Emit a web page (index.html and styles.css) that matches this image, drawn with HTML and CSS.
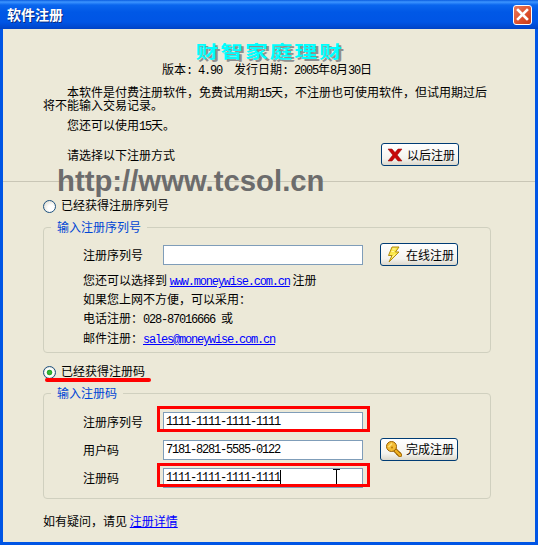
FILE: index.html
```html
<!DOCTYPE html>
<html lang="zh-CN">
<head>
  <meta charset="UTF-8" />
  <title>软件注册</title>
  <link rel="stylesheet" href="styles.css">
</head>
<body>
  <div class="window">
    <div class="titlebar">
      <span class="title">软件注册</span>
      <button class="close" aria-label="关闭">
        <svg width="13" height="13" viewBox="0 0 13 13"><path d="M2 2 L11 11 M11 2 L2 11" stroke="#fff" stroke-width="2.6" stroke-linecap="square"/></svg>
      </button>
    </div>

    <div class="client">
      <div class="watermark">http://www.tcsol.cn</div>

      <h1 class="brand">财智家庭理财</h1>
      <div class="version">版本<span class="lat">: 4.90  </span>发行日期<span class="lat">: 2005</span>年<span class="lat">8</span>月<span class="lat">30</span>日</div>

      <p class="intro">本软件是付费注册软件，免费试用期<span class="lat">15</span>天，不注册也可使用软件，但试用期过后<br>将不能输入交易记录。</p>
      <p class="remain">您还可以使用<span class="lat">15</span>天。</p>

      <div class="choose">
        <span>请选择以下注册方式</span>
        <button class="xp-btn later">
          <svg width="16" height="14" viewBox="0 0 16 14"><path d="M1 1 H5 L8 4.5 L11 1 H15 L10.2 7 L15 13 H11 L8 9.5 L5 13 H1 L5.8 7 Z" fill="#c80a0a" stroke="#8e0000" stroke-width=".5"/></svg>
          以后注册
        </button>
      </div>

      <div class="divider"></div>

      <label class="radio-row"><input type="radio" name="mode" class="radio"><span>已经获得注册序列号</span></label>

      <fieldset class="group">
        <legend>输入注册序列号</legend>
        <div class="serial-row">
          <span class="label">注册序列号</span>
          <div class="field"><input type="text" class="text-input"></div>
          <button class="xp-btn">
            <svg width="16" height="17" viewBox="0 0 16 17"><path d="M6 1 H13 L9.5 6 H13 L3 16 L6 9.5 H2.5 Z" fill="#fbe84a" stroke="#b08a10" stroke-width="1"/><path d="M6.5 3 H9.5 M5.5 5.5 H8 M6 11 L9 8.5" stroke="#fff6a8" fill="none"/></svg>
            在线注册
          </button>
        </div>
        <div class="info first">您还可以选择到 <a href="#" class="lat">www.moneywise.com.cn</a> 注册</div>
        <div class="info">如果您上网不方便，可以采用：</div>
        <div class="info">电话注册：<span class="lat">028-87016666 </span>或</div>
        <div class="info last">邮件注册：<a href="#" class="lat">sales@moneywise.com.cn</a></div>
      </fieldset>

      <label class="radio-row second"><input type="radio" name="mode" class="radio" checked><span>已经获得注册码</span></label>

      <fieldset class="group code">
        <legend>输入注册码</legend>
        <div class="code-grid">
          <span class="label">注册序列号</span>
          <div class="field marked"><input type="text" class="text-input lat" value="1111-1111-1111-1111"></div>
          <button class="xp-btn finish">
            <svg width="16" height="16" viewBox="0 0 16 16"><path d="M8 8 L14 14" stroke="#9a6000" stroke-width="4.4" stroke-linecap="square"/><path d="M8 8 L14 14" stroke="#f0b020" stroke-width="2.4" stroke-linecap="square"/><path d="M12 14.5 L10.5 13 M14.5 12 L13 10.5" stroke="#9a6000"/><circle cx="5.5" cy="5.5" r="5" fill="#f4bc34" stroke="#9a6000"/><path d="M2.5 6 L6 2.5" stroke="#fde27c" stroke-width="1.4"/><circle cx="6" cy="6.5" r="1" fill="#b87a08"/></svg>
            完成注册
          </button>
          <span class="label">用户码</span>
          <div class="field"><input type="text" class="text-input lat" value="7181-8281-5585-0122"></div>
          <span class="label">注册码</span>
          <div class="field marked low">
            <input type="text" class="text-input lat" value="1111-1111-1111-1111">
            <span class="caret"></span>
            <svg class="ibeam" width="9" height="17" viewBox="0 0 9 17"><path d="M1 .5 H8 M1 16.5 H8 M4.5 .5 V16.5" stroke="#000" fill="none"/></svg>
          </div>
        </div>
      </fieldset>

      <div class="help">如有疑问，请见 <a href="#">注册详情</a></div>
    </div>
  </div>
</body>
</html>
```

FILE: styles.css
```css
html, body {
  margin: 0;
  height: 100%;
  overflow: hidden;
}
body {
  font-family: "Noto Sans CJK SC", "Liberation Sans", sans-serif;
  font-size: 12px;
  color: #000;
}
.lat {
  font-family: "Liberation Mono", monospace;
  letter-spacing: -1.2px;
  white-space: pre;
  line-height: 0;
}
a {
  color: #0000ff;
}

.window {
  height: 545px;
  display: flex;
  flex-direction: column;
  background: #0055e5;
}
.titlebar {
  height: 29px;
  flex: none;
  display: flex;
  align-items: center;
  justify-content: space-between;
  padding: 0 6px 0 7px;
  background: linear-gradient(#0a5ce0 0, #3d95ff 2px, #0a66ee 5px, #0058e6 12px, #0055e5 22px, #0048d0 27px, #0042c4 29px);
}
.title {
  color: #fff;
  font-size: 14px;
  line-height: 16px;
  margin-top: -2px;
  font-weight: bold;
  text-shadow: 1px 1px #0a2a80;
}
.close {
  width: 19px;
  height: 20px;
  padding: 0;
  display: flex;
  align-items: center;
  justify-content: center;
  border: 1px solid #fff;
  border-radius: 3px;
  background: linear-gradient(135deg, #ea7a5c, #dc4f2c 60%, #c63a18);
}

.client {
  position: relative;
  flex: 1;
  margin: 0 3px 3px;
  padding: 14px 44px 0 40px;
  background: #ece9d8;
  display: flex;
  flex-direction: column;
}
.watermark {
  position: absolute;
  left: 54px;
  top: 135px;
  font: bold 29.3px/34px "Liberation Sans", sans-serif;
  color: #6c6c6c;
  white-space: nowrap;
}
.brand {
  margin: 0;
  height: 15px;
  padding-left: 4px;
  font-size: 17.5px;
  line-height: 15px;
  font-weight: bold;
  letter-spacing: 1.5px;
  text-align: center;
  color: #00ffff;
  text-shadow: 2px 2px #8f8f8f;
  transform: scaleX(1.3);
}
.version {
  height: 14px;
  margin-top: 4px;
  line-height: 14px;
  text-align: center;
}
.intro {
  margin: 9px 0 0;
  line-height: 13px;
  text-indent: 24px;
  white-space: nowrap;
}
.remain {
  margin: 7px 0 0 24px;
  line-height: 14px;
}
.choose {
  margin: 11px 32px 0 24px;
  display: flex;
  align-items: center;
  justify-content: space-between;
}
.divider {
  height: 1px;
  margin: 15px -44px 0 -40px;
  background: #c9c6b6;
}

.radio-row {
  display: flex;
  align-items: center;
  gap: 5px;
  height: 14px;
  line-height: 14px;
  margin-top: 17px;
}
.radio-row span {
  margin-top: -3px;
}
.radio-row.second {
  position: relative;
  margin-top: 12px;
}
.radio-row.second::after {
  content: "";
  position: absolute;
  left: 2px;
  top: 13px;
  width: 106px;
  height: 4px;
  border-radius: 2px;
  background: #ff0000;
}
.radio {
  appearance: none;
  width: 13px;
  height: 13px;
  margin: 0;
  flex: none;
  border: 1px solid #1c5180;
  border-radius: 50%;
  background: radial-gradient(circle at 65% 65%, #fff 30%, #dcd9cc 90%);
}
.radio:checked {
  background: radial-gradient(circle, #3fc03f 0, #2aa52a 2.4px, #fff 3.2px, #fff 4px, #dcd9cc 6px);
}

.group {
  margin: 7px 0 0;
  padding: 9px 0 5px 39px;
  min-width: 0;
  border: 1px solid #d0d0bf;
  border-radius: 4px;
}
.group legend {
  margin-left: -32px;
  padding: 0 6px;
  height: 14px;
  line-height: 14px;
  color: #0046d5;
}
.group.code {
  padding-top: 11px;
  padding-bottom: 11px;
}
.serial-row {
  display: flex;
  align-items: center;
  height: 23px;
}
.label {
  width: 80px;
  flex: none;
}
.code-grid {
  display: grid;
  grid-template-columns: 80px 200px 1fr;
  grid-auto-rows: 20px;
  row-gap: 8px;
  align-items: center;
}
.field {
  position: relative;
  width: 200px;
  height: 20px;
  flex: none;
}
.text-input {
  box-sizing: border-box;
  width: 100%;
  height: 100%;
  margin: 0;
  padding: 0 2px;
  border: 1px solid #7f9db9;
  border-radius: 0;
  outline: none;
  background: #fff;
  font-size: 12px;
}
.marked::after {
  content: "";
  position: absolute;
  left: -6px;
  right: -7px;
  top: -5px;
  bottom: -1px;
  border: 3px solid #ff0000;
  pointer-events: none;
}
.marked.low::after {
  top: -4px;
  bottom: 0;
}
.caret {
  position: absolute;
  left: 117px;
  top: 3px;
  width: 1px;
  height: 14px;
  background: #000;
}
.ibeam {
  position: absolute;
  left: 169px;
  top: 2px;
}

.xp-btn {
  width: 78px;
  height: 23px;
  margin: 0;
  padding: 0 0 0 5px;
  display: flex;
  align-items: center;
  gap: 4px;
  flex: none;
  font: inherit;
  line-height: 14px;
  white-space: nowrap;
  color: #000;
  border: 1px solid #003c74;
  border-radius: 3px;
  background: linear-gradient(#fff, #f4f3ee 70%, #dcd8cc);
}
.serial-row .xp-btn {
  margin-left: 17px;
}
.xp-btn.finish {
  grid-column: 3;
  grid-row: 1 / span 3;
  margin-left: 17px;
}

.info {
  height: 19px;
  line-height: 19px;
  white-space: nowrap;
}
.info.first {
  margin-top: 4px;
}
.info.last {
  margin-top: 1px;
}
.help {
  margin-top: 15px;
  line-height: 14px;
}
```
